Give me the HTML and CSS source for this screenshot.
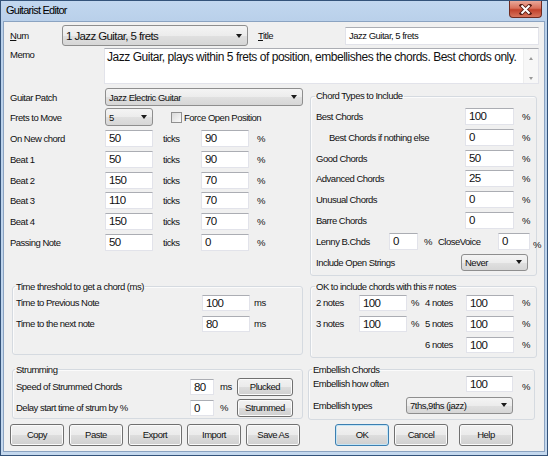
FILE: index.html
```html
<!DOCTYPE html>
<html>
<head>
<meta charset="utf-8">
<title>Guitarist Editor</title>
<link rel="stylesheet" href="styles.css">
</head>
<body>
<div class="window">
  <div class="titlebar">
    <span class="wtitle">Guitarist Editor</span>
    <div class="close">
      <svg width="13" height="11" viewBox="0 0 13 11"><path d="M2.5 1.5 L10.5 9.5 M10.5 1.5 L2.5 9.5" stroke="#5a1d14" stroke-width="3.8" stroke-linecap="square"/><path d="M2.5 1.5 L10.5 9.5 M10.5 1.5 L2.5 9.5" stroke="#fff" stroke-width="2"/></svg>
    </div>
  </div>
  <div class="client">
    <div class="r-num">
      <span class="l-num"><u>N</u>um</span>
      <div class="combo big c-num"><span>1 Jazz Guitar, 5 frets</span><i class="arr"></i></div>
      <span class="l-title"><u>T</u>itle</span>
      <div class="edit e-title">Jazz Guitar, 5 frets</div>
    </div>
    <div class="r-memo">
      <span class="l-memo">Memo</span>
      <div class="memo">
        <div class="memo-text">Jazz Guitar, plays within 5 frets of position, embellishes the chords. Best chords only.</div>
        <div class="vscroll"><i class="up"></i><i class="dn"></i></div>
      </div>
    </div>

    <div class="blk-b">
      <div class="col-l">
        <div class="row r18"><span class="l95">Guitar Patch</span><div class="combo c-patch"><span>Jazz Electric Guitar</span><i class="arr"></i></div></div>
        <div class="row r18 mt2"><span class="l95">Frets to Move</span><div class="combo c-frets"><span>5</span><i class="arr"></i></div><span class="chk"></span><span class="chk-l">Force Open Position</span></div>
        <div class="tgrid">
          <div class="row"><span class="l95">On New chord</span><div class="edit w48">50</div><span class="ticks">ticks</span><div class="edit w48">90</div><span class="pct">%</span></div>
          <div class="row"><span class="l95">Beat 1</span><div class="edit w48">50</div><span class="ticks">ticks</span><div class="edit w48">90</div><span class="pct">%</span></div>
          <div class="row"><span class="l95">Beat 2</span><div class="edit w48">150</div><span class="ticks">ticks</span><div class="edit w48">70</div><span class="pct">%</span></div>
          <div class="row"><span class="l95">Beat 3</span><div class="edit w48">110</div><span class="ticks">ticks</span><div class="edit w48">70</div><span class="pct">%</span></div>
          <div class="row"><span class="l95">Beat 4</span><div class="edit w48">150</div><span class="ticks">ticks</span><div class="edit w48">70</div><span class="pct">%</span></div>
          <div class="row"><span class="l95">Passing Note</span><div class="edit w48">50</div><span class="ticks">ticks</span><div class="edit w48">0</div><span class="pct">%</span></div>
        </div>
      </div>
      <fieldset class="grp g-chord">
        <legend>Chord Types to Include</legend>
        <div class="cgrid">
          <div class="row"><span class="l149">Best Chords</span><div class="edit w49">100</div><span class="pct">%</span></div>
          <div class="row"><span class="l149 ind">Best Chords if nothing else</span><div class="edit w49">0</div><span class="pct">%</span></div>
          <div class="row"><span class="l149">Good Chords</span><div class="edit w49">50</div><span class="pct">%</span></div>
          <div class="row"><span class="l149">Advanced Chords</span><div class="edit w49">25</div><span class="pct">%</span></div>
          <div class="row"><span class="l149">Unusual Chords</span><div class="edit w49">0</div><span class="pct">%</span></div>
          <div class="row"><span class="l149">Barre Chords</span><div class="edit w49">0</div><span class="pct">%</span></div>
          <div class="row"><span class="l-lenny">Lenny B.Chds</span><div class="edit w29">0</div><span class="p6">%</span><span class="l-close">CloseVoice</span><div class="edit w32">0</div><span class="p3 low">%</span></div>
        </div>
        <div class="row r17 mt4"><span class="l145">Include Open Strings</span><div class="combo c-never"><span>Never</span><i class="arr"></i></div></div>
      </fieldset>
    </div>

    <div class="blk-c">
      <fieldset class="grp g-time">
        <legend>Time threshold to get a chord (ms)</legend>
        <div class="row r16"><span class="l186">Time to Previous Note</span><div class="edit w48 h16">100</div><span class="ms">ms</span></div>
        <div class="row r16 mt5"><span class="l186">Time to the next note</span><div class="edit w48 h16">80</div><span class="ms">ms</span></div>
      </fieldset>
      <fieldset class="grp g-ok">
        <legend>OK to include chords with this # notes</legend>
        <div class="ngrid">
          <span>2 notes</span><div class="edit h16">100</div><span class="np1">%</span><span>4 notes</span><div class="edit h16">100</div><span class="np2">%</span>
          <span>3 notes</span><div class="edit h16">100</div><span class="np1">%</span><span>5 notes</span><div class="edit h16">100</div><span class="np2">%</span>
          <span class="c4">6 notes</span><div class="edit h16">100</div><span class="np2">%</span>
        </div>
      </fieldset>
    </div>

    <div class="blk-d">
      <fieldset class="grp g-strum">
        <legend>Strumming</legend>
        <div class="row r18"><span class="l174">Speed of Strummed Chords</span><div class="edit w24 h16">80</div><span class="unit">ms</span><div class="btn b56">Plucked</div></div>
        <div class="row r18 mt3"><span class="l174">Delay start time of strum by %</span><div class="edit w24 h16">0</div><span class="unit">%</span><div class="btn b56">Strummed</div></div>
      </fieldset>
      <fieldset class="grp g-emb">
        <legend>Embellish Chords</legend>
        <div class="row r16"><span class="l153">Embellish how often</span><div class="edit w47 h16">100</div><span class="p9 low">%</span></div>
        <div class="row r17 mt5"><span class="l93">Embellish types</span><div class="combo c-emb"><span>7ths,9ths (jazz)</span><i class="arr"></i></div></div>
      </fieldset>
    </div>

    <div class="blk-e">
      <div class="btn">Copy</div>
      <div class="btn">Paste</div>
      <div class="btn">Export</div>
      <div class="btn">Import</div>
      <div class="btn">Save As</div>
      <div class="btn ok">OK</div>
      <div class="btn">Cancel</div>
      <div class="btn help">Help</div>
    </div>
  </div>
</div>
</body>
</html>
```

FILE: styles.css
```css
* { box-sizing: border-box; }
body {
  margin: 0;
  font-family: "Liberation Sans", Arial, sans-serif;
  font-size: 9.5px;
  letter-spacing: -0.5px;
  color: #111;
  background: #fff;
}
.window {
  width: 548px;
  height: 456px;
  border: 1px solid #34537a;
  background: linear-gradient(180deg, #c2d7ef 0, #b9d0ea 20px, #c4d8ee 100%);
  display: flex;
  flex-direction: column;
}
.titlebar {
  height: 20px;
  flex: none;
  display: flex;
  justify-content: space-between;
  align-items: flex-start;
}
.wtitle {
  padding-left: 5px;
  font-size: 11px;
  letter-spacing: -0.75px;
  line-height: 19px;
  color: #000;
}
.close {
  width: 33px;
  height: 17px;
  margin-right: 5px;
  border: 1px solid #6e2b20;
  border-top: none;
  border-radius: 0 0 4px 4px;
  background: linear-gradient(#eaa899 0%, #d9705b 45%, #c1412a 55%, #d7745c 100%);
  display: flex;
  align-items: center;
  justify-content: center;
}
.client {
  flex: 1;
  margin: 0 2px 3px 2px;
  background: #f0f0f0;
  border: 1px solid #8ba3c1;
  padding: 3px 4px 0 6px;
}
.row { display: flex; align-items: center; }
.r16 { height: 16px; }
.r17 { height: 17px; }
.r18 { height: 18px; }
.mt2 { margin-top: 2px; }
.mt3 { margin-top: 3px; }
.mt4 { margin-top: 4px; }
.mt5 { margin-top: 5px; }

/* controls */
.edit {
  background: #fff;
  border: 1px solid #e2e3ea;
  border-top-color: #abadb3;
  font-size: 11.5px;
  letter-spacing: -0.6px;
  padding-left: 3px;
  height: 17px;
  line-height: 15px;
  white-space: nowrap;
}
.h16 { height: 16px; line-height: 14px; }
.combo {
  display: flex;
  align-items: center;
  justify-content: space-between;
  border: 1px solid #8e8e8e;
  border-radius: 3px;
  background: linear-gradient(#f4f4f4 0%, #ececec 50%, #e0e0e0 51%, #d6d6d6 100%);
  padding: 0 5px 0 3px;
  white-space: nowrap;
}
.combo.big { font-size: 11.5px; letter-spacing: -0.6px; }
.arr {
  width: 0;
  height: 0;
  border-left: 3.5px solid transparent;
  border-right: 3.5px solid transparent;
  border-top: 4px solid #1a1a1a;
}
.btn {
  width: 54px;
  height: 22px;
  border: 1px solid #707070;
  border-radius: 3px;
  background: linear-gradient(#f2f2f2 0%, #ebebeb 50%, #dddddd 51%, #cfcfcf 100%);
  box-shadow: inset 0 0 0 1px #fbfbfb;
  display: flex;
  align-items: center;
  justify-content: center;
  margin-right: 5px;
}
.btn.ok {
  margin-left: 30px;
  border-color: #3c7fb1;
  box-shadow: inset 0 0 0 1px #c4e5f6;
}
.btn.help { margin-left: 6px; }
.chk {
  width: 11px;
  height: 11px;
  margin-left: 18px;
  border: 1px solid #8f8f8f;
  background: linear-gradient(135deg, #d9d9d9, #fafafa);
}
.chk-l { margin-left: 2px; }

/* top */
.r-num { display: flex; align-items: center; height: 21px; }
.l-num { width: 52px; }
.c-num { width: 186px; height: 21px; }
.l-title { width: 87px; margin-left: 10px; }
.e-title { width: 194px; height: 18px; font-size: 9.5px; letter-spacing: -0.5px; line-height: 16px; }
.r-memo { display: flex; align-items: flex-start; height: 36px; margin-top: 2px; }
.l-memo { width: 94px; line-height: 14px; }
.memo {
  width: 435px;
  height: 36px;
  display: flex;
  background: #fff;
  border: 1px solid #e2e3ea;
  border-top-color: #abadb3;
}
.memo-text {
  flex: 1;
  font-size: 12px;
  letter-spacing: -0.47px;
  line-height: 13px;
  padding: 2px 2px 0 2px;
  white-space: nowrap;
  overflow: hidden;
}
.vscroll {
  width: 15px;
  display: flex;
  flex-direction: column;
  justify-content: space-between;
  align-items: center;
  padding: 8px 0 3px;
  background: #f7f7f7;
  border-left: 1px solid #eeeeee;
}
.up { border-left: 2.5px solid transparent; border-right: 2.5px solid transparent; border-bottom: 3px solid #9a9a9a; }
.dn { border-left: 2.5px solid transparent; border-right: 2.5px solid transparent; border-top: 3px solid #9a9a9a; }

/* block B */
.blk-b { display: flex; align-items: flex-start; margin-top: 4px; }
.col-l { width: 297px; margin-right: 3px; }
.l95 { width: 95px; }
.c-patch { width: 198px; height: 18px; }
.c-frets { width: 48px; height: 18px; }
.tgrid { margin-top: 4px; display: grid; grid-auto-rows: 17px; row-gap: 3.8px; }
.w24 { width: 24px; }
.w29 { width: 29px; }
.w32 { width: 32px; }
.w47 { width: 47px; }
.w48 { width: 48px; }
.w49 { width: 49px; }
.ticks { margin-left: 10px; width: 38px; }
.pct { margin-left: 8px; }

.grp {
  margin: 0;
  border: 1px solid #d5dae0;
  border-radius: 3px;
  min-width: 0;
  box-shadow: inset 1px 1px 0 #fbfbfb;
}
.grp legend { padding: 0 1px; margin-left: -1px; line-height: 12px; }
.g-chord { width: 227px; margin-top: 2px; padding: 6px 0 4px 5px; }
.cgrid { display: grid; grid-auto-rows: 17px; row-gap: 3.8px; }
.l149 { width: 149px; }
.ind { padding-left: 13px; }
.l-lenny { width: 73px; }
.p6 { margin-left: 6px; }
.l-close { margin-left: 6px; width: 60px; }
.p3 { margin-left: 3px; }
.p9 { margin-left: 9px; }
.low { align-self: flex-end; line-height: 11px; }
.l145 { width: 145px; }
.c-never { width: 67px; height: 17px; }

/* block C */
.blk-c { display: flex; align-items: flex-start; margin-top: 5px; }
.g-time { width: 291px; margin-left: 2px; padding: 2px 0 22px 3px; }
.g-ok { width: 227px; margin-left: 7px; padding: 2px 0 4px 5px; }
.l186 { width: 186px; }
.ms { margin-left: 4px; }
.ngrid {
  display: grid;
  grid-template-columns: 43px 48px 18px 41px 48px auto;
  grid-auto-rows: 16px;
  row-gap: 5px;
  align-items: center;
}
.np1 { padding-left: 4px; }
.np2 { padding-left: 8px; }
.c4 { grid-column: 4; }

/* block D */
.blk-d { display: flex; align-items: flex-start; margin-top: 6px; }
.g-strum { width: 291px; margin-left: 2px; padding: 2px 0 1px 3px; }
.g-emb { width: 227px; margin-left: 5px; padding: 0 0 5px 4px; }
.l174 { width: 174px; }
.unit { margin-left: 6px; width: 17px; }
.b56 { width: 56px; height: 18px; margin-right: 0; }
.l153 { width: 153px; }
.l93 { width: 93px; }
.c-emb { width: 107px; height: 17px; }

/* block E */
.blk-e { display: flex; margin-top: 4px; height: 22px; }
```
